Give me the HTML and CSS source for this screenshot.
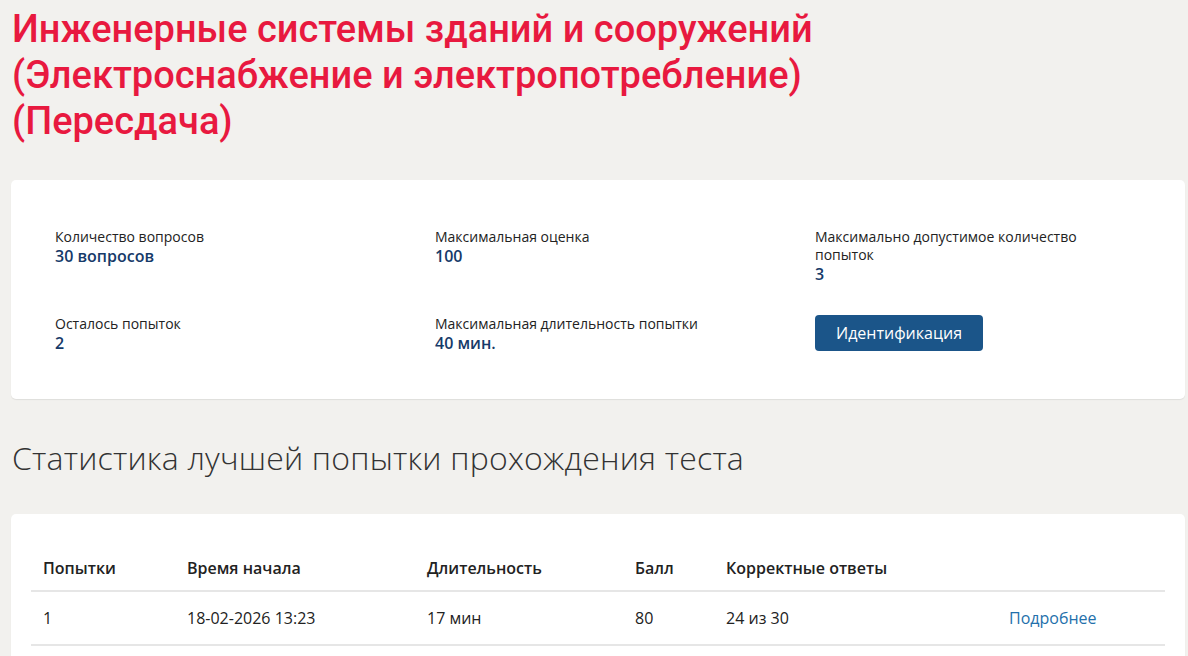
FILE: index.html
```html
<!DOCTYPE html>
<html lang="ru">

<head>
    <meta charset="UTF-8">
    <title>Инженерные системы зданий и сооружений</title>
    <link rel="stylesheet" href="styles.css">
</head>

<body>
    <div class="page">
        <h1 class="test-title">Инженерные системы зданий и сооружений (Электроснабжение и электропотребление) (Пересдача)</h1>

        <div class="card info-card">
            <div class="info-grid">
                <div class="info-item">
                    <div class="info-label">Количество вопросов</div>
                    <div class="info-value">30 вопросов</div>
                </div>
                <div class="info-item">
                    <div class="info-label">Максимальная оценка</div>
                    <div class="info-value">100</div>
                </div>
                <div class="info-item">
                    <div class="info-label">Максимально допустимое количество попыток</div>
                    <div class="info-value">3</div>
                </div>
                <div class="info-item">
                    <div class="info-label">Осталось попыток</div>
                    <div class="info-value">2</div>
                </div>
                <div class="info-item">
                    <div class="info-label">Максимальная длительность попытки</div>
                    <div class="info-value">40 мин.</div>
                </div>
                <div class="info-item">
                    <button class="btn-primary" type="button">Идентификация</button>
                </div>
            </div>
        </div>

        <h2 class="section-title">Статистика лучшей попытки прохождения теста</h2>

        <div class="card table-card">
            <table class="attempts">
                <thead>
                    <tr>
                        <th class="col-num">Попытки</th>
                        <th class="col-start">Время начала</th>
                        <th class="col-dur">Длительность</th>
                        <th class="col-score">Балл</th>
                        <th class="col-correct">Корректные ответы</th>
                        <th></th>
                    </tr>
                </thead>
                <tbody>
                    <tr>
                        <td>1</td>
                        <td>18-02-2026 13:23</td>
                        <td>17 мин</td>
                        <td>80</td>
                        <td>24 из 30</td>
                        <td><a href="#" class="details-link">Подробнее</a></td>
                    </tr>
                </tbody>
            </table>
        </div>
    </div>
</body>

</html>
```

FILE: styles.css
```css
body {
    margin: 0;
    padding: 0;
    background-color: #f2f1ee;
    font-family: "Open Sans", "Noto Sans", sans-serif;
    color: #222;
}

.page {
    padding: 0 3px 0 11px;
}

.test-title {
    margin: 0;
    padding: 6px 0 0 1px;
    max-width: 880px;
    font-family: Roboto, "Noto Sans", sans-serif;
    font-size: 38px;
    line-height: 46px;
    font-weight: 500;
    color: #e8193f;
}

.card {
    background-color: #ffffff;
    border-radius: 5px;
    box-shadow: 0 1px 1px rgba(0, 0, 0, 0.08);
}

/* Test info block */
.info-card {
    margin-top: 36px;
    padding: 48px 44px 45px 44px;
}

.info-grid {
    display: grid;
    grid-template-columns: repeat(3, 325px);
    column-gap: 55px;
    row-gap: 30px;
}

.info-label {
    font-size: 14px;
    line-height: 18px;
    color: #222;
    max-width: 290px;
}

.info-value {
    font-size: 16px;
    line-height: 21px;
    font-weight: 600;
    color: #163a69;
}

.btn-primary {
    display: block;
    width: 168px;
    height: 36px;
    border: none;
    border-radius: 4px;
    background-color: #1b5589;
    color: #fff;
    font-family: inherit;
    font-size: 16px;
    cursor: pointer;
}

.section-title {
    margin: 37px 0 0 1px;
    font-size: 32px;
    letter-spacing: 0.2px;
    line-height: 44px;
    font-weight: 300;
    color: #333;
}

/* Attempts table */
.table-card {
    margin-top: 34px;
    padding: 32px 20px 20px 20px;
}

.attempts {
    width: 100%;
    border-collapse: collapse;
}

.attempts th,
.attempts td {
    text-align: left;
    font-size: 16px;
    padding: 0 12px;
}

.attempts th {
    height: 44px;
    font-weight: 600;
    color: #222;
    border-bottom: 2px solid #e6e6e6;
}

.attempts td {
    height: 52px;
    border-bottom: 2px solid #e6e6e6;
}

.col-num { width: 120px; }
.col-start { width: 216px; }
.col-dur { width: 184px; }
.col-score { width: 67px; }
.col-correct { width: 259px; }

.details-link {
    color: #2370ab;
    text-decoration: none;
}
```
